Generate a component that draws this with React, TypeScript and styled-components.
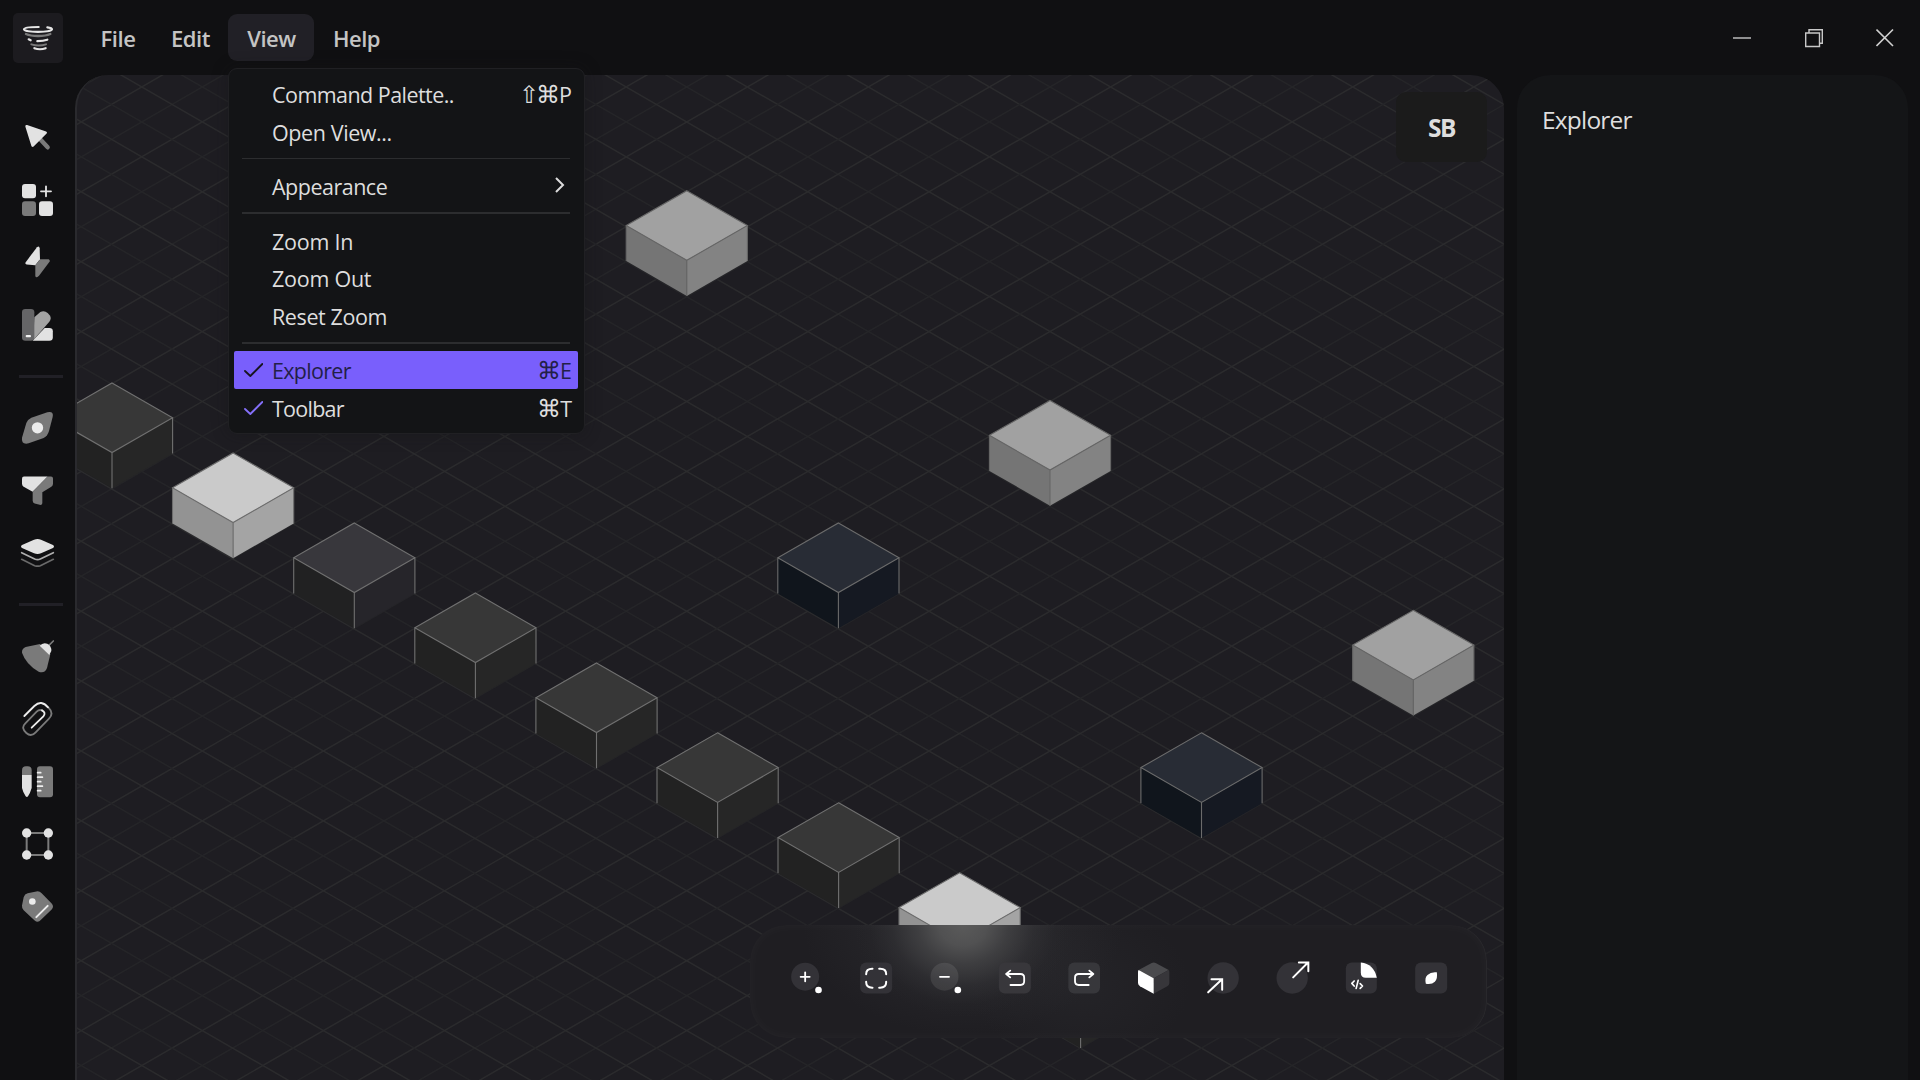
import React from "react";
import styled, { createGlobalStyle, css } from "styled-components";

const GlobalStyle = createGlobalStyle`
  * { box-sizing: border-box; }
  html, body { margin: 0; padding: 0; background: #101012; }
  body {
    font-family: "Open Sans", "Noto Sans", "DejaVu Sans", sans-serif;
    color: #dcdcdc;
    overflow: hidden;
  }
`;

const light = "#e2e2e2";
const grey = "#7a7a7a";

/* ---------- layout ---------- */

const Shell = styled.div`
  display: grid;
  grid-template-columns: 75px 1fr 391px;
  grid-template-rows: 75px 1fr;
  width: 1920px;
  height: 1080px;
  padding-right: 12px;
  overflow: hidden;
  background: #101012;
`;

const TitleBar = styled.header`
  grid-column: 1 / -1;
  display: flex;
  align-items: flex-start;
  padding: 13px 14px 0 13px;
`;

const LogoBox = styled.div`
  width: 50px;
  height: 50px;
  border-radius: 5px;
  background: #1c1b1f;
  svg { display: block; width: 50px; height: 50px; }
`;

const MenuBar = styled.nav`
  display: flex;
  margin: 1px 0 0 20px;
`;

const MenuSlot = styled.div`
  position: relative;
`;

const MenuButton = styled.button<{ $width: number; $open?: boolean; $spacing?: number }>`
  display: flex;
  align-items: center;
  justify-content: center;
  width: ${(p) => p.$width}px;
  height: 47px;
  padding: 0 0 0 1px;
  border: 0;
  border-radius: 9px;
  background: ${(p) => (p.$open ? "#212026" : "transparent")};
  color: #c4c4c4;
  font: 600 22px/30px "Open Sans", "Noto Sans", sans-serif;
  letter-spacing: ${(p) => p.$spacing ?? 0}px;
`;

const WindowControls = styled.div`
  display: flex;
  gap: 53.5px;
  margin: 15px 0 0 auto;
  svg { display: block; width: 18px; height: 20px; }
`;

/* ---------- dropdown ---------- */

const Dropdown = styled.div`
  position: absolute;
  z-index: 5;
  left: 0;
  top: 54px;
  width: 357px;
  height: 366px;
  padding: 6px 6px 6px 5px;
  border: 1px solid #202023;
  border-radius: 9px;
  background: #131416;
  box-shadow: 0 0 16px rgba(20, 20, 22, 0.4);
`;

const Item = styled.div<{ $active?: boolean }>`
  display: flex;
  align-items: center;
  height: 37.5px;
  padding: 0 6px 0 9px;
  border-radius: 2px;
  font-size: 21.5px;
  line-height: 30px;
  color: #dedede;
  white-space: pre;
  ${(p) =>
    p.$active &&
    css`
      height: 38px;
      padding-bottom: 1px;
      background: #795ffc;
      color: #231f48;
    `}
`;

const Mark = styled.span`
  width: 29px;
  flex: none;
  svg { display: block; width: 20px; height: 16px; }
`;

const Label = styled.span<{ $spacing: number }>`
  flex: 1;
  padding-top: 2.5px;
  letter-spacing: ${(p) => p.$spacing}px;
`;

const Keys = styled.span`
  display: flex;
  align-items: center;
  padding-top: 2px;
`;

const KeySymbol = styled.span<{ $width: number }>`
  display: inline-flex;
  justify-content: center;
  width: ${(p) => p.$width}px;
  padding-top: 1px;
  font-family: "DejaVu Sans", sans-serif;
  font-weight: 200;
  font-size: 23.5px;
`;

const Chevron = styled.svg`
  width: 12px;
  height: 18px;
  margin: -2px 6px 0 0;
`;

const Separator = styled.hr<{ $thick?: boolean }>`
  height: ${(p) => (p.$thick ? 2 : 1)}px;
  margin: ${(p) => (p.$thick ? "7.5px 8px" : "8px")};
  border: 0;
  background: #2c2d2f;
`;

/* ---------- side rail ---------- */

const Rail = styled.aside`
  display: flex;
  flex-direction: column;
  align-items: flex-start;
  padding: 44px 0 0 19px;
`;

const RailIcon = styled.svg`
  display: block;
  flex: none;
  width: 36px;
  height: 36px;
  margin-bottom: 26.6px;
`;

const RailRule = styled.div`
  flex: none;
  width: 44px;
  height: 3px;
  margin: 5.5px 0 32.2px;
  background: #212026;
`;

/* ---------- canvas ---------- */

const Canvas = styled.main`
  position: relative;
  margin-right: 13px;
  border-left: 2px solid #2a2a2e;
  border-radius: 33px 33px 0 0;
  background: #1e1d22;
  overflow: hidden;
`;

const SceneSvg = styled.svg`
  display: block;
  width: 1427px;
  height: 1005px;
`;

const Badge = styled.div`
  position: absolute;
  top: 17px;
  right: 17px;
  display: flex;
  align-items: center;
  justify-content: center;
  width: 91px;
  height: 70px;
  border-radius: 10px;
  background: #1b1b1b;
  color: #dedede;
  font-size: 24.5px;
  font-weight: 700;
  letter-spacing: -1.6px;
`;

const Dock = styled.div`
  position: absolute;
  right: 17px;
  bottom: 42px;
  display: flex;
  align-items: center;
  justify-content: center;
  gap: 33.35px;
  width: 737px;
  height: 113px;
  padding-bottom: 8px;
  border-radius: 36px;
  background:
    radial-gradient(ellipse 108px 92px at 213px 0, #5a5a5a 0%, #515152 22%, rgba(66, 66, 68, 0.85) 42%, rgba(54, 54, 57, 0.45) 66%, rgba(44, 44, 47, 0.14) 86%, rgba(40, 40, 43, 0) 100%),
    radial-gradient(ellipse 160px 110px at 213px 0, rgba(56, 56, 60, 0.35) 30%, rgba(50, 50, 53, 0) 100%),
    radial-gradient(ellipse 110px 80px at 330px 60px, rgba(44, 44, 48, 0.4) 0%, rgba(40, 40, 43, 0) 100%),
    #1f1e22;
  box-shadow: inset 0 0 14px rgba(255, 255, 255, 0.035), inset -1px 0 1px rgba(255, 255, 255, 0.04);
`;

const DockIcon = styled.svg`
  flex: none;
  width: 36px;
  height: 36px;
`;

const Panel = styled.section`
  border-radius: 33px 33px 0 0;
  background: #141517;
  padding: 28px 25px;
`;

const PanelTitle = styled.h2`
  margin: 0;
  font-size: 24.5px;
  line-height: 34px;
  font-weight: 400;
  letter-spacing: -0.8px;
  color: #dedede;
`;

/* ---------- scene ---------- */

type Tone = { top: string; left: string; right: string; edge: string };
const tones: Record<string, Tone> = {
  silver: { top: "#a1a1a1", left: "#757575", right: "#838383", edge: "#666666" },
  white: { top: "#cacaca", left: "#939393", right: "#a4a4a4", edge: "#6d6d6d" },
  dark: { top: "#373737", left: "#222222", right: "#262626", edge: "#707070" },
  plum: { top: "#38373c", left: "#212122", right: "#26252a", edge: "#707070" },
  navy: { top: "#282c35", left: "#10151c", right: "#151922", edge: "#6b6b6b" },
};

const cubes: [number, number, string][] = [
  [686.8, 190.7, "silver"],
  [1050, 400.5, "silver"],
  [1413.3, 610.3, "silver"],
  [838.4, 523, "navy"],
  [1201.5, 732.8, "navy"],
  [112, 383, "dark"],
  [233.1, 453, "white"],
  [354.3, 523, "plum"],
  [475.4, 593, "dark"],
  [596.5, 663, "dark"],
  [717.6, 732.8, "dark"],
  [838.6, 802.8, "dark"],
  [959.6, 872.8, "white"],
  [1080.6, 942.8, "dark"],
];

const W = 60.6;
const H = 34.8;
const D = 35.6;

function Cube({ x, y, tone }: { x: number; y: number; tone: Tone }) {
  return (
    <g transform={`translate(${x} ${y})`}>
      <path d={`M${-W} ${H}L0 ${2 * H}V${2 * H + D}L${-W} ${H + D}Z`} fill={tone.left} />
      <path d={`M${W} ${H}L0 ${2 * H}V${2 * H + D}L${W} ${H + D}Z`} fill={tone.right} />
      <path d={`M0 0L${W} ${H}L0 ${2 * H}L${-W} ${H}Z`} fill={tone.top} />
      <path
        d={`M0 0L${W} ${H}L0 ${2 * H}L${-W} ${H}ZM${-W} ${H}V${H + D}M${W} ${H}V${H + D}M0 ${2 * H}V${2 * H + D}`}
        fill="none"
        stroke={tone.edge}
        strokeWidth="1.1"
      />
    </g>
  );
}

function Scene() {
  const slope = 34.95 / 60.55;
  const x0 = 686.7;
  const y0 = 191.8;
  const lines: React.ReactNode[] = [];
  for (let i = -32; i <= 60; i++) {
    const y = y0 + i * 34.95;
    const stroke = i % 2 === 0 ? "#2b2b2d" : "#252528";
    lines.push(
      <path
        key={i}
        d={`M60 ${y + (60 - x0) * slope}L1520 ${y + (1520 - x0) * slope}M60 ${y - (60 - x0) * slope}L1520 ${
          y - (1520 - x0) * slope
        }`}
        stroke={stroke}
        strokeWidth="1.5"
        fill="none"
      />
    );
  }
  return (
    <SceneSvg viewBox="77 75 1427 1005">
      {lines}
      {cubes.map(([x, y, t], i) => (
        <Cube key={i} x={x} y={y} tone={tones[t]} />
      ))}
    </SceneSvg>
  );
}

/* ---------- icons ---------- */

const Logo = () => (
  <svg viewBox="39 39 150 150" fill="none" strokeLinecap="round">
    <path d="M116 81C92 81 72 83 72 88C72 93 92 95.500 114 95.500S156 93 156 88C156 85.500 151 83 142 82" stroke="#e6e6e6" strokeWidth="6.500" />
    <path d="M78 102C95 110 134 110 151 102" stroke="#7a7a7a" strokeWidth="7" />
    <path d="M86 118L92 121M112 123.500Q130 123 142 119" stroke="#e6e6e6" strokeWidth="6.500" />
    <path d="M94 133Q116 140 138 133" stroke="#7a7a7a" strokeWidth="6" />
    <path d="M103 144.500Q120 151 137 144.500" stroke="#e6e6e6" strokeWidth="6.500" />
  </svg>
);

const Check = ({ color }: { color: string }) => (
  <svg viewBox="0 0 60 48" fill="none" stroke={color} strokeWidth="5.500" strokeLinecap="round" strokeLinejoin="round">
    <path d="M6 27L22 42L58 6" />
  </svg>
);

const railTop = (
  <>
    <RailIcon viewBox="57 357 108 108">
      <path d="M120 417L143 442" stroke={grey} strokeWidth="13" strokeLinecap="round" />
      <path d="M80 379L137 398L98 437Z" fill={light} stroke={light} strokeWidth="8" strokeLinejoin="round" />
    </RailIcon>
    <RailIcon viewBox="57 546 108 108">
      <rect x="66" y="552" width="42" height="43" rx="9" fill={light} />
      <rect x="66" y="604" width="42" height="44" rx="9" fill={grey} />
      <rect x="117" y="604" width="42" height="44" rx="9" fill={light} />
      <path d="M138 559V589M123 574H153" stroke={light} strokeWidth="5.500" strokeLinecap="round" />
    </RailIcon>
    <RailIcon viewBox="57 43.5 108 108">
      <path d="M111 53Q118 48 119 56L120 89L106 107L80 105Q74 103 77 98Z" fill={light} />
      <path d="M120 89L146 89Q151 91 149 96L117 139Q106 149 106 137V107Z" fill={grey} />
    </RailIcon>
    <RailIcon viewBox="57 231 108 108">
      <path d="M103 262L121 246Q133 240 143 249L149 256Q156 265 148 275L100 330Z" fill="#a3a3a3" />
      <path d="M98 332.500L134 294H148Q158.500 294 158.500 304V322Q158.500 332.500 148 332.500Z" fill={light} />
      <rect x="66" y="237" width="37" height="95.500" rx="10" fill="#656567" />
      <rect x="77" y="315" width="16" height="6.500" rx="3" fill="#f2f2f2" />
    </RailIcon>
  </>
);

const railMiddle = (
  <>
    <RailIcon viewBox="57 540 108 108">
      <path
        d="M94 563L142 547Q162 543 158 561L147 603Q143 618 131 624L86 640Q63 645 66 623L79 579Q83 568 94 563Z"
        fill={grey}
      />
      <circle cx="112.500" cy="593.500" r="17" fill="#ececec" />
    </RailIcon>
    <RailIcon viewBox="57 727.500 108 108">
      <path d="M72 738H143L98 784L71 769Q66 766 66 760V744Q66 738 72 738Z" fill={light} />
      <path
        d="M143 738H153Q159 738 159 744V760Q159 766 154 769L127 785V818Q126 825 119 823L104 819Q98 817 98 811V784Z"
        fill={grey}
      />
    </RailIcon>
    <RailIcon viewBox="57 915 108 108" fill="none" strokeLinecap="round" strokeLinejoin="round">
      <path d="M65 988L104 1007Q113 1010 121 1007L160 988" stroke="#6a6a6a" strokeWidth="5" />
      <path d="M65 968L104 987Q113 991 121 987L160 968" stroke="#adadad" strokeWidth="5" />
      <path
        d="M66 945L102 929Q113 925 123 929L159 945Q165 949 159 954L123 970Q113 974 102 970L66 954Q60 949 66 945Z"
        fill={light}
      />
    </RailIcon>
  </>
);

const railBottom = (
  <>
    <RailIcon viewBox="57 176 108 108">
      <path d="M146 196L160 182" stroke={grey} strokeWidth="5" strokeLinecap="round" />
      <path d="M77 200L120 191L151 222L141 263Q135 280 116 274Q78 252 66 217Q65 205 77 200Z" fill={grey} />
      <path d="M119 196Q129 185 142 190Q155 197 154 212L148 224Z" fill={light} />
    </RailIcon>
    <RailIcon viewBox="57 363 108 108" fill="none" strokeWidth="5.500" strokeLinecap="round">
      <path
        d="M145 382C159 396 157 406 147 416L107 457C97 468 88 467 79 459C68 449 66 440 76 430L110 395Q117 388 126 391"
        stroke={grey}
      />
      <path d="M73 408L103 378Q124 358 144 382" stroke="#ececec" />
      <path d="M126 391Q139 398 130 409L95 443" stroke="#ececec" />
    </RailIcon>
    <RailIcon viewBox="57 551 108 108">
      <path d="M66 584V570Q66 558 78 558H83Q95 558 95 570V584Z" fill={grey} />
      <path d="M66 584H95V623Q90 640 84 648Q81 652 77 648Q69 636 66 623Z" fill={light} />
      <rect x="111" y="558" width="48" height="93" rx="9" fill={grey} />
      <path
        d="M113 577H122M113 590.500H127M113 604H122M113 617.500H127M113 631H122"
        stroke="#f0f0f0"
        strokeWidth="5.500"
        strokeLinecap="round"
      />
    </RailIcon>
    <RailIcon viewBox="57 738 108 108">
      <rect x="80" y="759" width="65" height="66" fill="none" stroke={grey} strokeWidth="6" />
      {[80, 145].map((x) => [759, 825].map((y) => <circle key={`${x}-${y}`} cx={x} cy={y} r="14" fill={light} />))}
    </RailIcon>
    <RailIcon viewBox="57 926.5 108 108">
      <path
        d="M83 939L109 934Q118 932 125 939L155 970Q163 979 155 988L123 1019Q114 1029 104 1021L71 990Q65 985 66 976L71 951Q74 941 83 939Z"
        fill={grey}
      />
      <circle cx="97" cy="964" r="10" fill="#ececec" />
      <path d="M109 1011L143 977" stroke="#ececec" strokeWidth="6" strokeLinecap="round" />
    </RailIcon>
  </>
);

const tile = "#333237";

const dockIcons = (
  <>
    <DockIcon viewBox="144 148 108 108">
      <circle cx="195.500" cy="198" r="42" fill={tile} />
      <path d="M195.500 185V212M182 198.500H209" stroke="#fff" strokeWidth="5.500" strokeLinecap="round" />
      <circle cx="235.500" cy="238" r="10" fill="#fff" />
    </DockIcon>
    <DockIcon viewBox="353.500 148 108 108">
      <rect x="360" y="155.500" width="96" height="93" rx="18" fill={tile} />
      <path
        d="M378 191V190Q378 174 396 174H397M417 174H420Q438 174 438 190V191M378 213V215Q378 231 396 231H397M417 231H420Q438 231 438 215V213"
        fill="none"
        stroke="#fff"
        strokeWidth="6"
        strokeLinecap="round"
      />
    </DockIcon>
    <DockIcon viewBox="560 148 108 108">
      <circle cx="612.500" cy="198" r="42" fill="#fff" fillOpacity="0.09" />
      <path d="M599 198.500H626" stroke="#fff" strokeWidth="5.500" strokeLinecap="round" />
      <circle cx="652.500" cy="238" r="10" fill="#fff" />
    </DockIcon>
    <DockIcon viewBox="768.500 148 108 108">
      <rect x="777" y="155.500" width="96" height="93" rx="18" fill="#38373b" />
      <path
        d="M811 180L799 190L811 200M799 190H842Q853 190 853 201V212Q853 223 842 223H812"
        fill="none"
        stroke="#fff"
        strokeWidth="5.500"
        strokeLinecap="round"
        strokeLinejoin="round"
      />
    </DockIcon>
    <DockIcon viewBox="977 148 108 108">
      <rect x="984" y="155.500" width="95" height="93" rx="18" fill="#37373b" />
      <path
        d="M1047 180L1059 190L1047 200M1059 190H1015Q1004 190 1004 201V212Q1004 223 1015 223H1045"
        fill="none"
        stroke="#fff"
        strokeWidth="5.500"
        strokeLinecap="round"
        strokeLinejoin="round"
      />
    </DockIcon>
    <DockIcon viewBox="75 148 108 108">
      <path d="M86 178L125 157Q131 154 137 157L176 178L131 203Z" fill="#4a4a4d" />
      <path d="M176 178Q178 180 178 184V218Q178 224 172 227L131 249V203Z" fill="#37363a" />
      <path d="M86 178L131 203V249L90 227Q84 223 84 217V183Q84 180 86 178Z" fill="#fff" />
    </DockIcon>
    <DockIcon viewBox="284.500 148 108 108">
      <circle cx="339" cy="202" r="47" fill={tile} />
      <path d="M294 245L334 207M304 206H336V237" fill="none" stroke="#fff" strokeWidth="6" strokeLinecap="round" />
    </DockIcon>
    <DockIcon viewBox="491.500 148 108 108" overflow="visible">
      <circle cx="546" cy="202" r="47" fill={tile} />
      <path d="M549 200L592 157M566 155.500H594.500V182" fill="none" stroke="#fff" strokeWidth="6" strokeLinecap="round" />
    </DockIcon>
    <DockIcon viewBox="699.500 148 108 108">
      <rect x="708" y="155.500" width="93" height="93" rx="18" fill={tile} />
      <path d="M753 155.500Q792 160 801 201H768Q753 201 753 186Z" fill="#fff" />
      <path
        d="M733 211L726 218L733 226M751 219L758 226L751 233M745 209L739 233"
        fill="none"
        stroke="#fff"
        strokeWidth="5"
        strokeLinecap="round"
        strokeLinejoin="round"
      />
    </DockIcon>
    <DockIcon viewBox="908.500 148 108 108">
      <rect x="915" y="155.500" width="96" height="93" rx="18" fill={tile} />
      <path d="M980 185Q983 205 974 213Q965 222 947 219Q943 200 952 193Q962 183 980 185Z" fill="#fff" />
    </DockIcon>
  </>
);

/* ---------- app ---------- */

export default function App() {
  return (
    <>
      <GlobalStyle />
      <Shell>
        <TitleBar>
          <LogoBox>
            <Logo />
          </LogoBox>
          <MenuBar>
            <MenuButton $width={69} $spacing={-0.45}>
              File
            </MenuButton>
            <MenuButton $width={76} $spacing={-0.45}>
              Edit
            </MenuButton>
            <MenuSlot>
              <MenuButton $width={86} $spacing={-0.5} $open>
                View
              </MenuButton>
              <Dropdown>
                <Item>
                  <Mark />
                  <Label $spacing={-0.55}>Command Palette..</Label>
                  <Keys>
                    <KeySymbol $width={16}>⇧</KeySymbol>
                    <KeySymbol $width={22}>⌘</KeySymbol>P
                  </Keys>
                </Item>
                <Item>
                  <Mark />
                  <Label $spacing={-0.4}>Open View...</Label>
                </Item>
                <Separator />
                <Item>
                  <Mark />
                  <Label $spacing={-0.5}>Appearance</Label>
                  <Chevron viewBox="0 0 12 18" fill="none" stroke="#dcdcdc" strokeWidth="2">
                    <path d="M2 2L9 9L2 16" />
                  </Chevron>
                </Item>
                <Separator $thick />
                <Item>
                  <Mark />
                  <Label $spacing={-0.25}>Zoom In</Label>
                </Item>
                <Item>
                  <Mark />
                  <Label $spacing={-0.25}>Zoom Out</Label>
                </Item>
                <Item>
                  <Mark />
                  <Label $spacing={-0.4}>Reset Zoom</Label>
                </Item>
                <Separator $thick />
                <Item $active>
                  <Mark>
                    <Check color="#17151f" />
                  </Mark>
                  <Label $spacing={-0.7}>Explorer</Label>
                  <Keys>
                    <KeySymbol $width={22}>⌘</KeySymbol>E
                  </Keys>
                </Item>
                <Item>
                  <Mark>
                    <Check color="#8570fa" />
                  </Mark>
                  <Label $spacing={-0.75}>Toolbar</Label>
                  <Keys>
                    <KeySymbol $width={22}>⌘</KeySymbol>T
                  </Keys>
                </Item>
              </Dropdown>
            </MenuSlot>
            <MenuButton $width={84} $spacing={-0.5}>
              Help
            </MenuButton>
          </MenuBar>
          <WindowControls>
            <svg viewBox="0 0 18 20" stroke="#c8c8c8" strokeWidth="1.4">
              <path d="M0 10H18" />
            </svg>
            <svg viewBox="0 0 18 20" fill="none" stroke="#c8c8c8" strokeWidth="1.4">
              <path d="M0.700 5H14.500V18.500H0.700ZM4 5V1.700H17.300V15.300H14.500" />
            </svg>
            <svg viewBox="0 0 18 20" stroke="#d0d0d0" strokeWidth="1.600">
              <path d="M0.500 1.500L17 18M17 1.500L0.500 18" />
            </svg>
          </WindowControls>
        </TitleBar>
        <Rail>
          {railTop}
          <RailRule />
          {railMiddle}
          <RailRule />
          {railBottom}
        </Rail>
        <Canvas>
          <Scene />
          <Badge>SB</Badge>
          <Dock>{dockIcons}</Dock>
        </Canvas>
        <Panel>
          <PanelTitle>Explorer</PanelTitle>
        </Panel>
      </Shell>
    </>
  );
}
